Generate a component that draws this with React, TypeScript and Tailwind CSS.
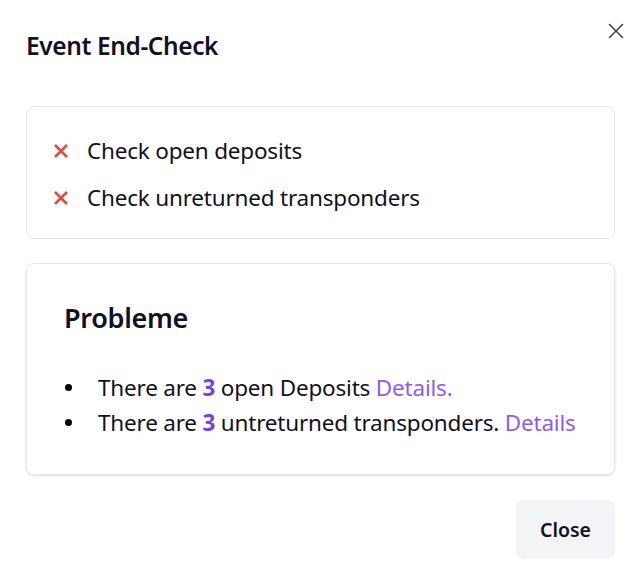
import { X } from "lucide-react";

function CrossMark() {
  return (
    <svg width="16" height="16" viewBox="0 0 16 16" className="shrink-0 text-[#e2493f]">
      <path d="M2 2 L14 14 M14 2 L2 14" stroke="currentColor" strokeWidth="2.6" strokeLinecap="butt" />
    </svg>
  );
}

export default function App() {
  const checks = ["Check open deposits", "Check unreturned transponders"];

  return (
    <div className="relative w-[639px] h-[585px] bg-white pl-[26px] pr-[24px] text-[#111122] font-['Noto_Sans',sans-serif]">
      <button className="absolute right-[10px] top-[18px] text-[#444]">
        <X size={26} strokeWidth={1.5} />
      </button>

      <h2 className="pt-[29px] text-[24.5px] font-semibold leading-[34px] tracking-[-0.4px]">Event End-Check</h2>

      {/* checks */}
      <div className="mt-[43px] rounded-lg border border-gray-200 pl-[26px] pr-[20px] pt-[28px] pb-[24px] flex flex-col gap-[15px]">
        {checks.map((c) => (
          <div key={c} className="flex items-center gap-[18px]">
            <CrossMark />
            <span className="text-[22.5px] leading-[32px] tracking-[-0.2px]">{c}</span>
          </div>
        ))}
      </div>

      {/* problems */}
      <div className="mt-[24px] rounded-lg border border-gray-200 shadow-sm pl-[37px] pr-[20px] pt-[36px] pb-[34px]">
        <h3 className="text-[27px] font-semibold leading-[36px] tracking-[-0.3px]">Probleme</h3>
        <ul className="mt-[34px] flex flex-col text-[22.5px] leading-[35px] tracking-[-0.2px]">
          <li className="flex items-center">
            <span className="ml-[1px] mr-[26px] h-[7px] w-[7px] rounded-full bg-black" />
            <span>
              There are <span className="font-bold text-[#7443e8]">3</span> open Deposits{" "}
              <a className="text-[#8b5cf6]">Details.</a>
            </span>
          </li>
          <li className="flex items-center">
            <span className="ml-[1px] mr-[26px] h-[7px] w-[7px] rounded-full bg-black" />
            <span>
              There are <span className="font-bold text-[#7443e8]">3</span> untreturned transponders.{" "}
              <a className="text-[#8b5cf6]">Details</a>
            </span>
          </li>
        </ul>
      </div>

      <div className="mt-[25px] flex justify-end">
        <button className="h-[59px] w-[99px] rounded-lg bg-[#f3f4f6] text-[19.5px] font-semibold text-[#111122]">
          Close
        </button>
      </div>
    </div>
  );
}
